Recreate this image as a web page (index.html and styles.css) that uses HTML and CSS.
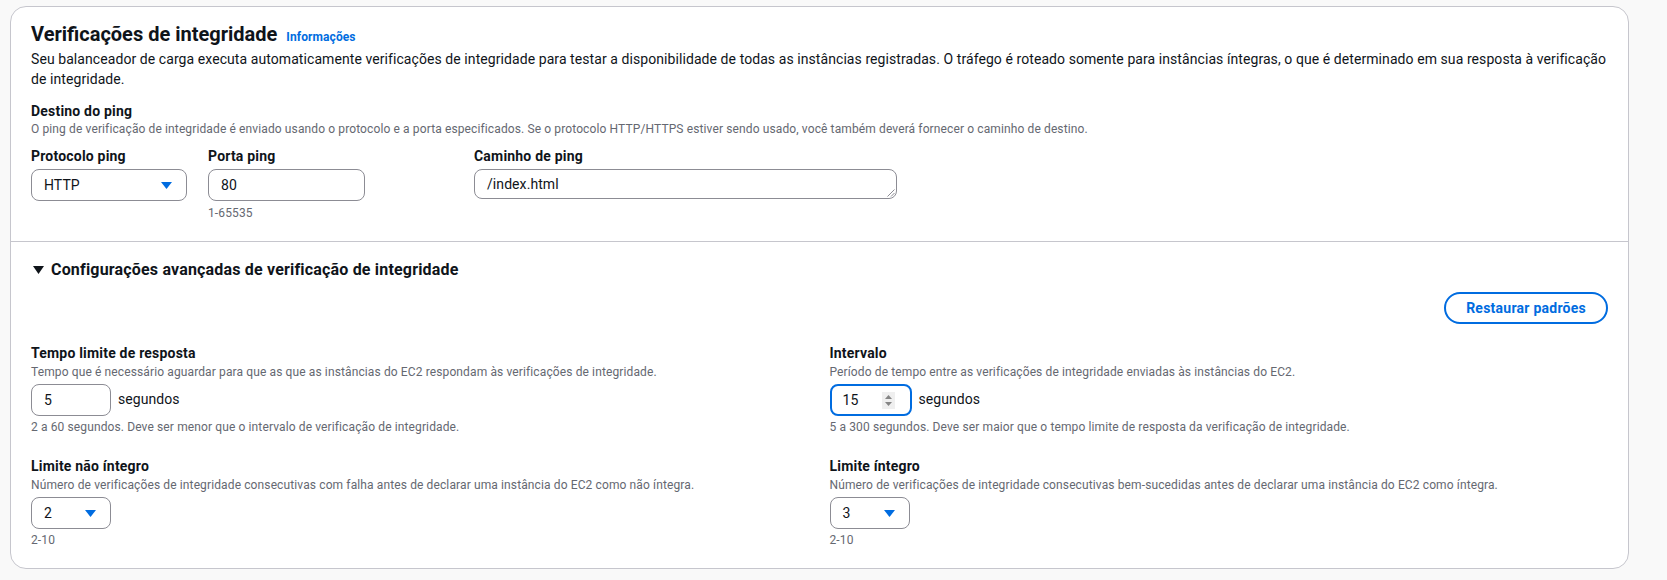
FILE: index.html
```html
<!DOCTYPE html>
<html lang="pt-BR">
<head>
<meta charset="utf-8">
<title>Verificações de integridade</title>
<link rel="stylesheet" href="styles.css">
</head>
<body>
<div class="card">
  <section class="sec sec-top">
    <div class="head">
      <h2 class="title">Verificações de integridade</h2>
      <a class="info">Informações</a>
    </div>
    <p class="desc">Seu balanceador de carga executa automaticamente verificações de integridade para testar a disponibilidade de todas as instâncias registradas. O tráfego é roteado somente para instâncias íntegras, o que é determinado em sua resposta à verificação de integridade.</p>
    <div class="group">
      <div class="label">Destino do ping</div>
      <div class="sub">O ping de verificação de integridade é enviado usando o protocolo e a porta especificados. Se o protocolo HTTP/HTTPS estiver sendo usado, você também deverá fornecer o caminho de destino.</div>
      <div class="row-top">
        <div class="field f-proto">
          <div class="label">Protocolo ping</div>
          <div class="select control"><span>HTTP</span><svg class="caret" width="11" height="7" viewBox="0 0 11 7"><path d="M0 0H11L5.5 7Z"/></svg></div>
        </div>
        <div class="field f-port">
          <div class="label">Porta ping</div>
          <div class="input control">80</div>
          <div class="hint">1-65535</div>
        </div>
        <div class="field f-path">
          <div class="label">Caminho de ping</div>
          <div class="input control textarea">/index.html<svg class="grip" width="9" height="9" viewBox="0 0 9 9"><path d="M8.5 1.5L1.5 8.5M8.5 5L5 8.5" stroke="#8c8c94" stroke-width="1"/></svg></div>
        </div>
      </div>
    </div>
  </section>
  <section class="sec sec-adv">
    <div class="exp-head"><svg class="exp-caret" width="11" height="8" viewBox="0 0 11 8"><path d="M0 0H11L5.5 8Z"/></svg><span>Configurações avançadas de verificação de integridade</span></div>
    <div class="actions"><button class="btn">Restaurar padrões</button></div>
    <div class="grid">
      <div class="field">
        <div class="label">Tempo limite de resposta</div>
        <div class="sub">Tempo que é necessário aguardar para que as que as instâncias do EC2 respondam às verificações de integridade.</div>
        <div class="unit-row">
          <div class="input control small">5</div>
          <span class="unit">segundos</span>
        </div>
        <div class="hint">2 a 60 segundos. Deve ser menor que o intervalo de verificação de integridade.</div>
      </div>
      <div class="field">
        <div class="label">Intervalo</div>
        <div class="sub">Período de tempo entre as verificações de integridade enviadas às instâncias do EC2.</div>
        <div class="unit-row">
          <div class="input control small focused"><span>15</span><svg class="spin" width="13" height="17" viewBox="0 0 13 17"><rect width="13" height="17" fill="#efefef"/><path d="M3 7H10L6.5 3Z M3 10H10L6.5 14Z" fill="#858585"/></svg></div>
          <span class="unit">segundos</span>
        </div>
        <div class="hint">5 a 300 segundos. Deve ser maior que o tempo limite de resposta da verificação de integridade.</div>
      </div>
      <div class="field">
        <div class="label">Limite não íntegro</div>
        <div class="sub">Número de verificações de integridade consecutivas com falha antes de declarar uma instância do EC2 como não íntegra.</div>
        <div class="select control small"><span>2</span><svg class="caret" width="11" height="7" viewBox="0 0 11 7"><path d="M0 0H11L5.5 7Z"/></svg></div>
        <div class="hint">2-10</div>
      </div>
      <div class="field">
        <div class="label">Limite íntegro</div>
        <div class="sub">Número de verificações de integridade consecutivas bem-sucedidas antes de declarar uma instância do EC2 como íntegra.</div>
        <div class="select control small"><span>3</span><svg class="caret" width="11" height="7" viewBox="0 0 11 7"><path d="M0 0H11L5.5 7Z"/></svg></div>
        <div class="hint">2-10</div>
      </div>
    </div>
  </section>
</div>
</body>
</html>
```
FILE: styles.css
```css
* { box-sizing: border-box; }
body {
  margin: 0;
  background: #f9f9f9;
  font-family: Roboto, "Liberation Sans", sans-serif;
  font-size: 14px;
  line-height: 20px;
  letter-spacing: 0.075px;
  color: #0f141a;
}
.card {
  width: 1619px;
  margin: 6px 0 0 10px;
  background: #fff;
  border: 1px solid #c6c6cd;
  border-radius: 16px;
}
.sec { padding: 15px 20px 20px; }
.sec-top { border-bottom: 1px solid #c6c6cd; }
.sec-adv { padding-top: 18px; }
.head { display: flex; align-items: baseline; gap: 9px; }
.title { margin: 0; font-size: 20px; line-height: 24px; font-weight: 700; letter-spacing: 0; }
.info { font-size: 12px; line-height: 16px; font-weight: 700; color: #006ce0; letter-spacing: 0.1px; }
.desc { margin: 3px 0 0; }
.group { margin-top: 12px; }
.label { font-weight: 700; letter-spacing: 0.2px; }
.sub, .hint { font-size: 12px; line-height: 16px; color: #656871; letter-spacing: 0.12px; }
.row-top { display: flex; gap: 21px; margin-top: 9px; }
.row-top .control { margin-top: 3px; }
.row-top .hint { margin-top: 4px; }
.f-proto { width: 156px; }
.f-port { width: 157px; }
.f-path { width: 423px; margin-left: 88px; }
.control {
  height: 32px;
  border: 1px solid #8c8c94;
  border-radius: 8px;
  background: #fff;
  display: flex;
  align-items: center;
}
.input { padding: 0 12px; }
.textarea { height: 30px; position: relative; }
.grip { position: absolute; right: 1px; bottom: 1px; }
.select { justify-content: space-between; padding: 0 14px 0 12px; }
.caret { fill: #006ce0; }
.exp-head { display: flex; align-items: center; gap: 7px; padding-left: 2px; font-size: 16px; line-height: 20px; font-weight: 700; letter-spacing: 0.18px; }
.exp-caret { fill: #0f141a; }
.actions { display: flex; justify-content: flex-end; margin-top: 12px; }
.btn {
  height: 32px;
  padding: 0 20px;
  border: 2px solid #006ce0;
  border-radius: 20px;
  background: #fff;
  color: #006ce0;
  font-family: inherit;
  font-size: 14px;
  font-weight: 700;
  letter-spacing: 0.25px;
}
.grid { display: grid; grid-template-columns: 1fr 1fr; column-gap: 20px; row-gap: 21px; margin-top: 19px; }
.grid .sub { margin-top: 1px; }
.grid .control { margin-top: 4px; }
.grid .hint { margin-top: 3px; }
.unit-row { display: flex; align-items: center; gap: 7px; margin-top: 4px; }
.unit-row .control { margin-top: 0; }
.small { width: 80px; }
.focused { width: 82px; border: 2px solid #006ce0; padding: 0 15px 0 11px; justify-content: space-between; }
.unit { padding-bottom: 2px; }
```
